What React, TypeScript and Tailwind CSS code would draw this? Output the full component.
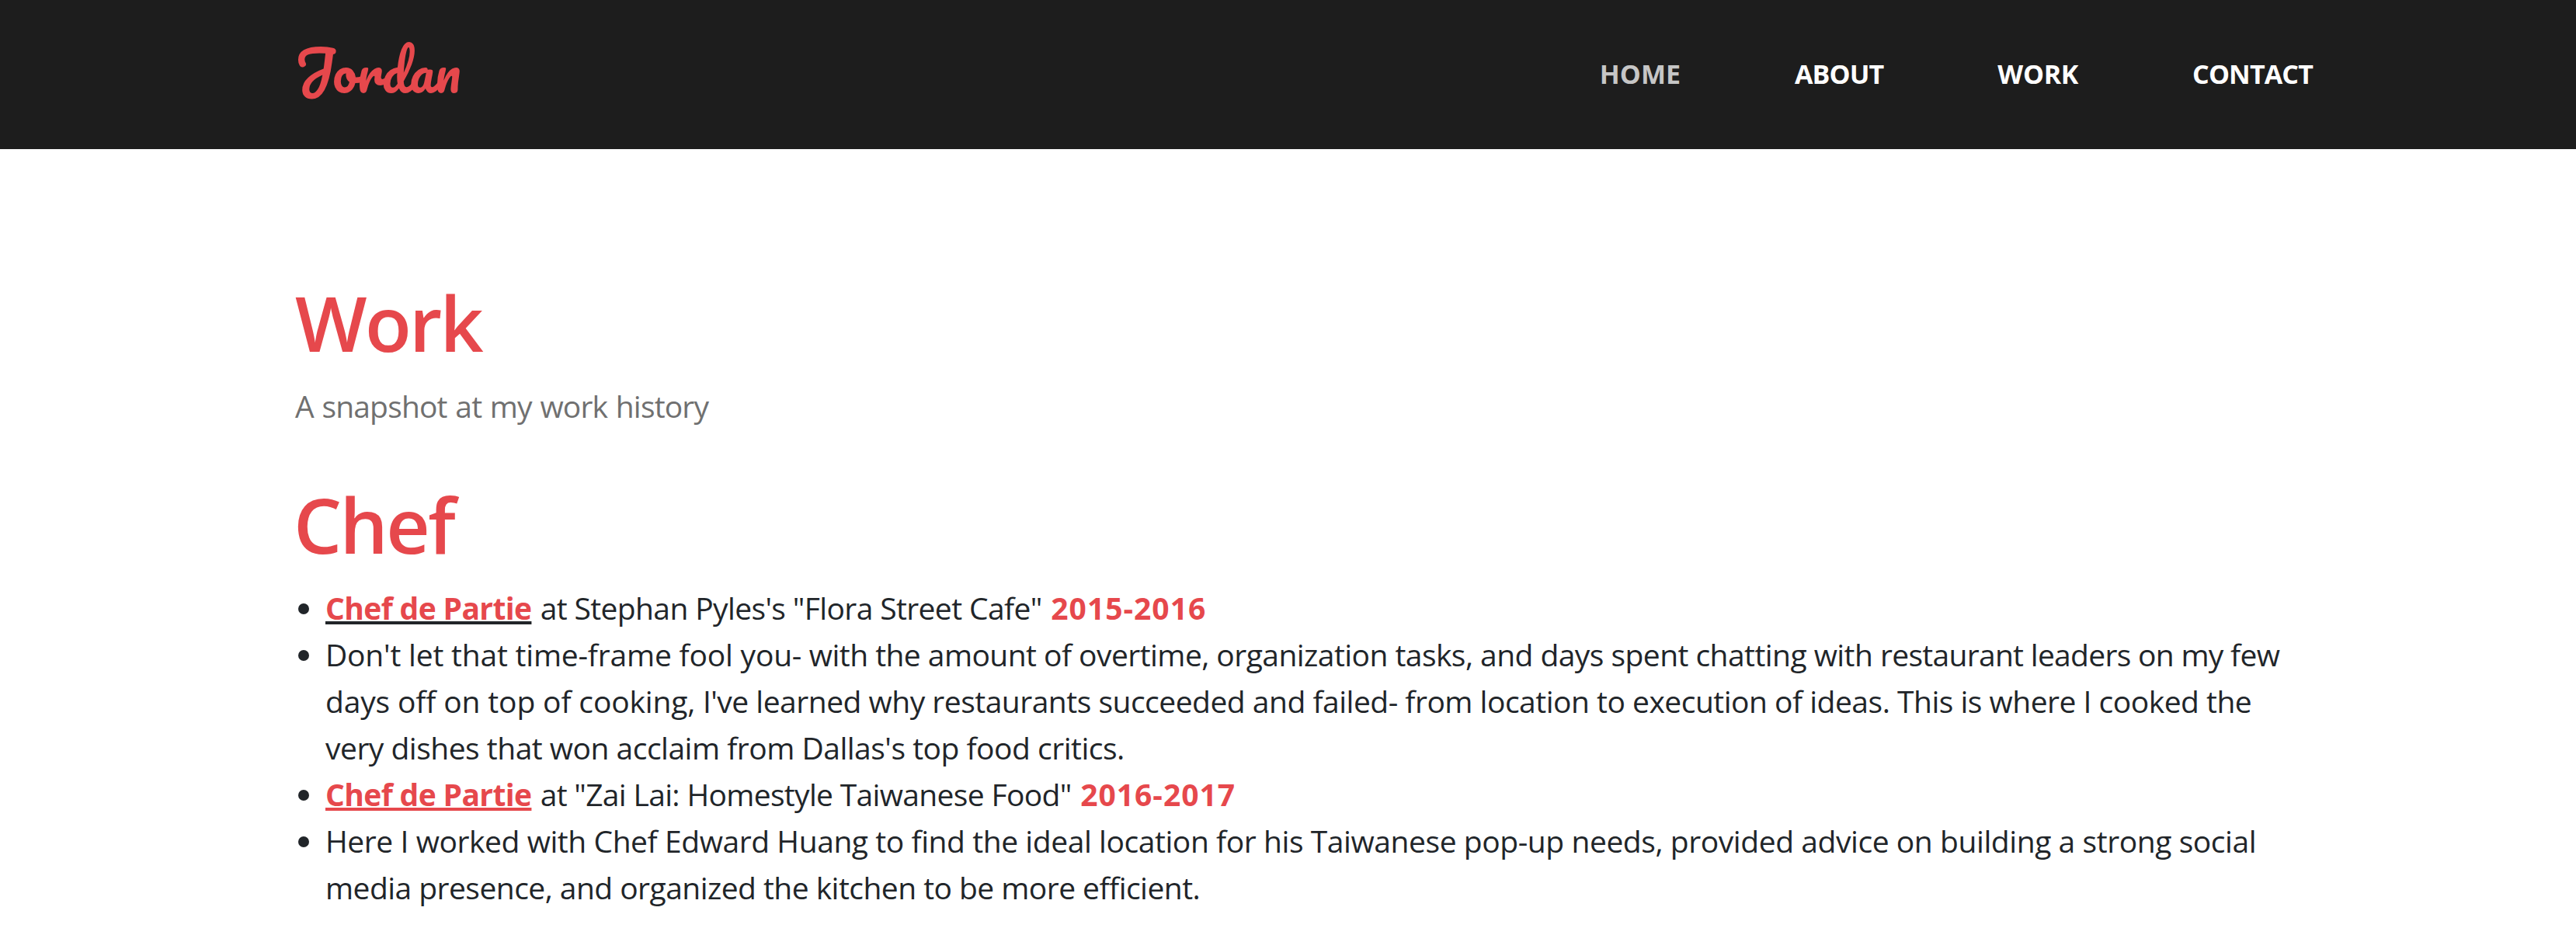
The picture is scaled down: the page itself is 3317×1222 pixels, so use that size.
import type { ReactNode } from 'react';

function Bullet({ children }: { children: ReactNode }) {
  return (
    <li className="flex items-start">
      <span className="mt-6 mr-[21px] ml-1 size-3.5 shrink-0 rounded-full bg-[#212529]" />
      <div>{children}</div>
    </li>
  );
}

function Role({ line }: { line: string }) {
  return (
    <span className="inline-block w-[267px] font-bold tracking-[-0.63px] text-[#e6484c]">
      <span className={`underline decoration-4 underline-offset-2 [text-decoration-skip-ink:none] ${line}`}>
        Chef de Partie
      </span>
    </span>
  );
}

function Years({ children }: { children: ReactNode }) {
  return <b className="ml-[2px] font-bold tracking-[1px] text-[#e6484c]">{children}</b>;
}

export default function App() {
  return (
    <div className="min-h-screen bg-white font-['Open_Sans',sans-serif] text-[#212529]">
      <header className="flex h-48 items-center justify-between bg-[#1d1d1d] pr-[339px] pl-[379px]">
        <a className="pb-[10px] font-['Pacifico',cursive] text-[70px] leading-none text-[#e6484c]">Jordan</a>
        <nav className="flex gap-[147px] pb-px text-[34px] font-bold text-white">
          <a className="text-[#c6c6c6]">HOME</a>
          <a className="tracking-[-0.9px]">ABOUT</a>
          <a className="tracking-[-0.3px]">WORK</a>
          <a className="tracking-[-0.85px]">CONTACT</a>
        </nav>
      </header>
      <main className="px-[380px] pt-[163px] text-[39px] leading-[60px]">
        <h1 className="text-[98px] leading-[120px] font-semibold tracking-[-2.75px] text-[#e6484c]">Work</h1>
        <p className="mt-[18px] tracking-[-0.83px] text-[#707070] [word-spacing:1.3px]">A snapshot at my work history</p>
        <h2 className="mt-[62px] -ml-[2px] text-[98px] leading-[120px] font-semibold tracking-[-2.5px] text-[#e6484c]">
          Chef
        </h2>
        <ul className="mt-[18px] whitespace-nowrap tracking-[-0.5px]">
          <Bullet>
            <Role line="decoration-[#212529]" />{' '}
            <span className="tracking-[-0.62px]">at Stephan Pyles's "Flora Street Cafe"</span> <Years>2015-2016</Years>
          </Bullet>
          <Bullet>
            <p>
              <span className="tracking-[-0.2px]">Don't let that time-frame fool you-</span>{' '}
              <span className="tracking-[-0.55px]">
                with the amount of overtime, organization tasks, and days spent chatting with
              </span>{' '}
              <span className="tracking-[-0.7px]">restaurant leaders on my few</span>
            </p>
            <p>
              <span className="tracking-[-0.15px]">days off on top of cooking,</span> I've learned why restaurants
              succeeded and failed- from location to execution of ideas. This is where I cooked the
            </p>
            <p>very dishes that won acclaim from Dallas's top food critics.</p>
          </Bullet>
          <Bullet>
            <Role line="decoration-[#e6484c]" />{' '}
            <span className="tracking-[-0.67px]">at "Zai Lai: Homestyle Taiwanese Food"</span> <Years>2016-2017</Years>
          </Bullet>
          <Bullet>
            <p className="tracking-[-0.43px]">
              Here I worked with Chef Edward Huang to find the ideal location for his Taiwanese pop-up needs, provided
              advice on building a strong social
            </p>
            <p className="tracking-[-0.54px]">media presence, and organized the kitchen to be more efficient.</p>
          </Bullet>
        </ul>
      </main>
    </div>
  );
}
